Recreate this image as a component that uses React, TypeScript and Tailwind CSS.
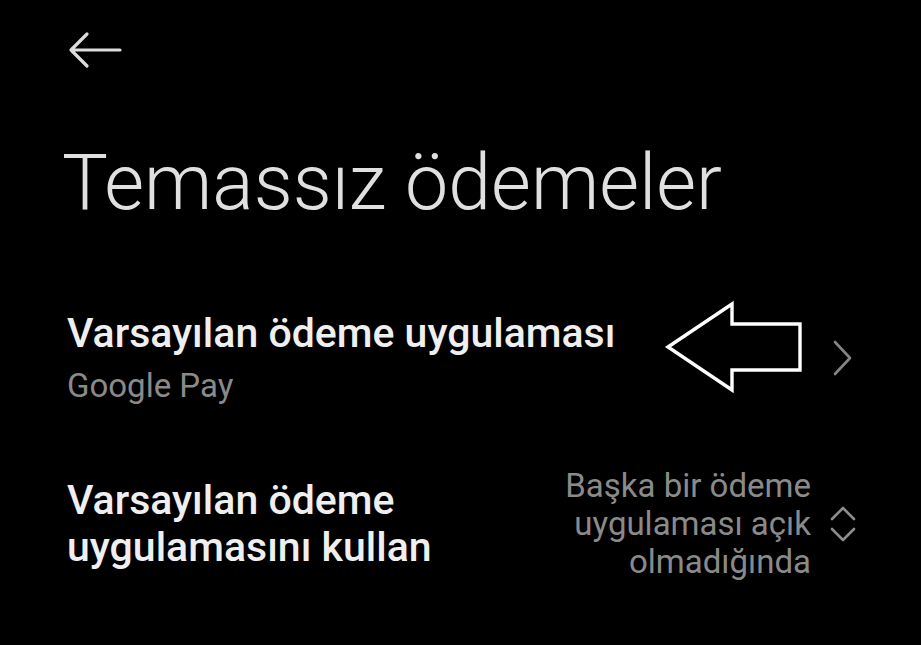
const font = { fontFamily: "Roboto, 'Noto Sans', sans-serif" };

function BackArrow() {
  return (
    <svg width="56" height="40" viewBox="0 0 56 40" fill="none">
      <path
        d="M54 20H5M21 4L5 20L21 36"
        stroke="#dcdcdc"
        strokeWidth="3.2"
        strokeLinecap="round"
        strokeLinejoin="round"
      />
    </svg>
  );
}

function Chevron() {
  return (
    <svg width="22" height="38" viewBox="0 0 22 38" fill="none">
      <path
        d="M4 3L19 19L4 35"
        stroke="#858585"
        strokeWidth="2.6"
        strokeLinecap="round"
        strokeLinejoin="round"
      />
    </svg>
  );
}

function UpDown() {
  return (
    <svg width="26" height="38" viewBox="0 0 26 38" fill="none">
      <path
        d="M2 14L13 3L24 14M2 24L13 35L24 24"
        stroke="#8c8c8c"
        strokeWidth="2.6"
        strokeLinecap="round"
        strokeLinejoin="round"
      />
    </svg>
  );
}

// hollow pointer drawn over the first row
function Pointer() {
  return (
    <svg
      className="absolute left-[664px] top-[300px]"
      width="140"
      height="94"
      viewBox="664 300 140 94"
      fill="none"
    >
      <path
        d="M668 347L732 304V324H800V370H732V390Z"
        stroke="#ffffff"
        strokeWidth="3.4"
        strokeLinejoin="miter"
      />
    </svg>
  );
}

export default function App() {
  return (
    <div
      className="relative h-[645px] w-[921px] overflow-hidden bg-black"
      style={font}
    >
      <div className="flex flex-col">
        <div className="ml-[66px] mt-[30px] h-[40px]">
          <BackArrow />
        </div>

        <h1 className="ml-[62px] mt-[75px] text-[77px] font-light leading-none text-[#e0e0e0]">
          Temassız ödemeler
        </h1>

        <div className="mt-[87px] flex items-center pl-[67px] pr-[68px]">
          <div className="flex flex-1 flex-col">
            <span className="text-[41px] font-medium leading-[48px] text-[#efefef]">
              Varsayılan ödeme uygulaması
            </span>
            <span className="mt-[9px] text-[33px] leading-[40px] text-[#8a8a8a]">
              Google Pay
            </span>
          </div>
          <Chevron />
        </div>

        <div className="mt-[61px] flex items-center pl-[67px] pr-[65px]">
          <div className="flex flex-1 flex-col text-[41px] font-medium leading-[47px] text-[#efefef]">
            <span>Varsayılan ödeme</span>
            <span>uygulamasını kullan</span>
          </div>
          <div className="flex items-center gap-[19px]">
            <div className="flex flex-col items-end text-[33px] leading-[38px] text-[#8a8a8a]">
              <span>Başka bir ödeme</span>
              <span>uygulaması açık</span>
              <span>olmadığında</span>
            </div>
            <UpDown />
          </div>
        </div>
      </div>

      <Pointer />
    </div>
  );
}
